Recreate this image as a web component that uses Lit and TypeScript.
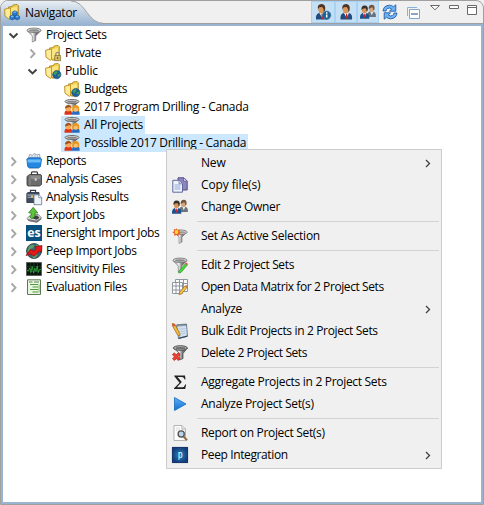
import { LitElement, html, css, svg, nothing, TemplateResult, SVGTemplateResult } from "lit";
import { customElement, property } from "lit/decorators.js";
import { classMap } from "lit/directives/class-map.js";
import { styleMap } from "lit/directives/style-map.js";

const FONT = '"Open Sans", "Noto Sans", sans-serif';

const folder = svg`
  <path d="M4.500 3 8.500 2.500 9 1l4-.6 1.300 1.300V12l-6 3-4-1z" fill="#f3d04e" stroke="#a57c14" stroke-width=".8"/>
  <path d="M6 4.500 13 2.800v8.500L7 13.500z" fill="#fbe682"/>
  <path d="M.6 5.200 3.200 4.600 6.500 3.800v10.700l-1.200.9L1 12.200z" fill="#fdeb98" stroke="#b88718" stroke-width=".9"/>
  <path d="M6.500 5v9.500l2 .7 4-1.700" fill="none" stroke="#cb9c1e" stroke-width=".9"/>`;

const funnelBody = svg`
  <path d="M1.300 3.800 6.300 9v6l3.400-1.500V9l5-5.200z" fill="url(#metal)" stroke="#666" stroke-width=".6"/>
  <ellipse cx="8" cy="3.300" rx="7" ry="2.200" fill="#ddd" stroke="#777" stroke-width=".9"/>
  <ellipse cx="8" cy="3.500" rx="5" ry="1.200" fill="#8b8b8b"/>`;

const metal = svg`<defs><linearGradient id="metal"><stop offset="0" stop-color="#888"/><stop offset=".4" stop-color="#f2f2f2"/><stop offset=".65" stop-color="#777"/><stop offset="1" stop-color="#505050"/></linearGradient></defs>`;

const globe = svg`
  <circle cx="11.800" cy="11.600" r="4.200" fill="#1d609f" stroke="#123f6c" stroke-width=".5"/>
  <path d="M8.500 10.500q1-2.600 3.300-2.600l.8 1.600-1.500 1.500-.4 1.500zM12.500 12l2.500-1.500.7.5-1.500 2.800-1.700-1z" fill="#3fa34a"/>`;

const pencil = svg`
  <path d="m7.500 13.500 5.500-6.500 2 1.600-5.500 6.300-2.500.8z" fill="#f6c544" stroke="#9a6a12" stroke-width=".7"/>
  <path d="m13 7 1-1 1.900 1.600-.9 1z" fill="#d8604c"/>`;

const man = svg`
  <path d="M2.500 15.500q-.6-5 2.500-6.200L8 8l3.500 1.300q3.300 1.200 2.500 6.200z" fill="#214d7e"/>
  <path d="M5.800 8.800 8 8.500l2.800.3L9 14.500z" fill="#fff"/>
  <path d="M7.900 9.800h1.200l1 4-1 1.700-1.100-1.700z" fill="#c3222d"/>
  <ellipse cx="7.800" cy="5.300" rx="3" ry="4.200" fill="#d89659"/>
  <path d="M4.500 6Q3.300.2 8 .1q4.800.1 3.500 6.400l-1.200 1.500Q10.600 4.500 8.700 3L6 3.300Q4.800 4 4.500 6z" fill="#4d3426"/>`;

const pair = svg`
  <path d="M7 13q0-5 2.500-5.300h3.500q3.300.5 2.900 5.300z" fill="#68737c"/>
  <path d="m10.300 7.800 1.500 3.500 1.600-3.500z" fill="#eee"/>
  <ellipse cx="11.500" cy="4.700" rx="2.500" ry="3.400" fill="#d5a47b"/>
  <path d="M8.700 5Q8.500.8 11.800.8q3.400.1 2.700 4.700l-1.200 1q0-2.500-1-3.200z" fill="#75553e"/>
  <path d="M0 14.800Q-.3 10 2.300 9.200L4.500 8l2.400 1.200Q9.600 10 9.300 14.800z" fill="#1b518d"/>
  <path d="m3 8.800 1.700 5L6.500 8.800z" fill="#fff"/><path d="M4.300 9.500h1l.5 3-.9 1.200-1-1.200z" fill="#c3222d"/>
  <ellipse cx="4.500" cy="5.800" rx="2.600" ry="3.500" fill="#d89659"/>
  <path d="M1.600 6.300Q.8 1.500 4.600 1.500q4 .1 3.100 5L6.500 7.500q.2-2.500-1-3.300-3-.3-3.900 2.100z" fill="#38302a"/>`;

const groupFilter = svg`${metal}
  <path d="M1.500 3 6 7.800h4L14.500 3z" fill="url(#metal)"/>
  <ellipse cx="8" cy="2.500" rx="7" ry="2" fill="#d6d6d6" stroke="#606060" stroke-width=".9"/>
  <ellipse cx="8" cy="2.800" rx="4.800" ry="1" fill="#858585"/>
  <path d="M.5 15.800q-.3-4 2.200-4.500h3.300q2.500.5 2 4.500z" fill="#dc341b"/>
  <path d="M8 15.800q-.2-4 2.200-4.500h3.400q2.400.5 2 4.500z" fill="#276bc1"/>
  <circle cx="4.300" cy="9.500" r="3" fill="#f5a95a"/><path d="M1 9.500q0-3.600 3.300-3.600t3.200 3.400L5.800 8z" fill="#a0521a"/>
  <circle cx="11.600" cy="9.700" r="3" fill="#f7c078"/><path d="M8.200 13V9q.3-3.100 3.400-3.100T15.200 9v4l-1.300-1.500-.6-2.700-3 .2-.7 2.500z" fill="#e9971b"/>`;

const icons: Record<string, SVGTemplateResult> = {
  navigator: svg`${folder}
    <path d="M5.800 12.300 8.200 11l2.500 1.300v2.500l-2.500 1.200-2.400-1.200zM10.700 12.300l2.400-1.300 2.500 1.300v2.500L13.100 16l-2.400-1.200zM8.300 8l2.500-1.300L13.300 8v2.700L10.800 12l-2.500-1.300z" fill="#2779cf" stroke="#124f99" stroke-width=".6"/>
    <path d="m9 8.200 1.800-.9 1.800.9-1.800.9zM6.500 12.600l1.800-1 1.700 1-1.700.8zM11.300 12.600l1.800-1 1.700 1-1.700.8z" fill="#75b8f2"/>`,
  filter: svg`${metal}${funnelBody}`,
  locked: svg`${folder}<path d="M10.800 11V9.300q0-2 1.800-2t1.800 2V11" fill="none" stroke="#8e8e8e" stroke-width="1.200"/><path d="M9.700 10.500h5.900v5.200H9.700z" fill="#d3bb69" stroke="#7e6a2c" stroke-width=".7"/><path d="M12.200 12h.9v2h-.9z" fill="#604e18"/>`,
  public: svg`${folder}${globe}`,
  group: groupFilter,
  reports: svg`
    <path d="m2.500 5.500 1-4 3 .7L8.500.5 11 2l2.500-.8.7 4.300z" fill="#e7edf3" stroke="#7b8b9a" stroke-width=".7"/>
    <path d="M6 2.500v3M9 1.500v4M11.500 2.500v3" stroke="#93a4b3" stroke-width=".7"/>
    <path d="M.8 6 3 4.800h11.200L15.500 6l-1 7.500L12.500 15H3.300l-1.600-1.500z" fill="#2288e2" stroke="#125da8" stroke-width=".8"/>
    <path d="M1.300 6.500h13.600l-.4 3H1.700z" fill="#6bbcf8"/>`,
  briefcase: svg`
    <path d="M5.500 4V2q0-1.200 1-1.200h4q1 0 1 1.200v2" fill="none" stroke="#3d3d3d" stroke-width="1.300"/>
    <path d="M1 5.500 3.500 3.500H14q1.500 0 1.500 1.500v8.500L13.500 15h-11Q1 15 1 13.500z" fill="#6c6c6c" stroke="#343434" stroke-width=".8"/>
    <path d="M4 4v10.500" stroke="#9d9d9d" stroke-width=".8"/><path d="M5 4.500h9.500v3.300L10 9 5 8z" fill="#8d8d8d"/><path d="M8.700 7.200h2v2.500h-2z" fill="#ccc"/>`,
  results: svg`
    <path d="M4.500 3.500V1.300h5v2.200" fill="none" stroke="#323d4c" stroke-width="1.300"/>
    <path d="M.8 4.500 2 3.500h11v9l-1 1H.8z" fill="#3f4c5d" stroke="#252f3c" stroke-width=".8"/>
    <path d="M1.300 5h11v2.500h-11z" fill="#7a899b"/><path d="M1.500 8.500H9" stroke="#b8c4d0" stroke-width=".7"/><path d="M5 6.500h2v2H5z" fill="#e5c25a"/>
    <path d="M8 5.800h5l2.700 2.700v7.200H8z" fill="#eef3fa" stroke="#65748a" stroke-width=".8"/><path d="M12.800 6v2.700h2.700" fill="#fff" stroke="#65748a" stroke-width=".7"/>`,
  export: svg`
    <path d="M1 11.500 5 7.500h7.500L15.500 11l-4.500 4-8.500-1.500z" fill="#dadada" stroke="#767676" stroke-width=".8"/>
    <path d="m1.500 12 8.800 1.500 5-2.500v1.500l-4.500 3.200L2.500 14z" fill="#777"/><path d="m4 10.500 3-2h4.500l2 2.500-3 1.800z" fill="#404040"/>
    <path d="M5.500 11.500Q9.500 10.500 9 6h2.800L7.200.3 2.700 5.800l2.600.2q.7 2.200-1.600 3.900z" fill="#5fc43b" stroke="#26811c" stroke-width=".8"/>`,
  es: svg`<path d="M0 0h16v16H0z" fill="#07507f"/><text x="8" y="12" font-family="Open Sans, sans-serif" font-weight="bold" font-size="12" text-anchor="middle" textLength="13.500" lengthAdjust="spacingAndGlyphs" fill="#fff">es</text>`,
  peep: svg`
    <circle cx="8" cy="8" r="7.500" fill="#45606d" stroke="#273f48" stroke-width=".8"/>
    <path d="m3 3.500 3-2 2.500 1L7 5 4.500 6 3 9H1.200zM10 1.500l3.500 1.500L15 7l-4-1-1.500-2zM7 9l3.500 1 1 2.500L9 15H7L6 11.500z" fill="#58a06a"/>
    <path d="M0 12.500 4.500 6.500l3 1.800 3-3-1.500-1.500L16 2.500l-.5 6.800-2-1.500-5.300 5.400-3.500-2.200z" fill="#e61818" stroke="#8b0808" stroke-width=".7"/>`,
  sensitivity: svg`
    <path d="M.5 1.500h15v13H.5z" fill="#0a160d" stroke="#5c5c5c"/>
    <path d="M1 5.500h14M1 10.500h14M4.500 2v12M8 2v12M11.500 2v12" stroke="#254b2b" stroke-width=".5"/>
    <path d="M1 9.500h1.500L3.700 7l1.200 4.500L6.200 5.500l1.400 6.500 1.200-5 1.200 3.500L11.200 5l1.200 6.500 1-3H15" fill="none" stroke="#2fae40" stroke-width=".8"/>`,
  evaluation: svg`
    <path d="M1.500 .8h13v14.700h-13z" fill="#e8f5df" stroke="#5c7a50"/>
    <path d="M3 3h3.500M8 3h5" stroke="#64805a"/><path d="M4 5.500h8M6.500 8H12M4 10.500h8M6.500 13H12" stroke="#4f9b3e" stroke-width="1.200"/><path d="M13 5.500v8" stroke="#84aa78"/>`,
  copy: svg`
    <path d="M6 .8h6L15.200 4v9H6z" fill="#8f86bb" stroke="#584d8c" stroke-width="1"/><path d="M11.500 1v3.200h3.500" fill="#d8d4ee" stroke="#584d8c" stroke-width=".7"/>
    <path d="M.8 3.300h6.400l3.300 3.300v8.600H.8z" fill="#eef2fc" stroke="#5e689f" stroke-width="1"/><path d="M7 3.500v3.300h3.300" fill="#cfd6ee" stroke="#5e689f" stroke-width=".7"/>
    <path d="M2.500 8h6M2.500 10h6M2.500 12h6" stroke="#95a8d5" stroke-width="1"/>`,
  owners: pair,
  person: man,
  personInfo: svg`<g transform="translate(-1.500)">${man}</g><circle cx="11.700" cy="11.200" r="4.200" fill="#1d6295" stroke="#4f86ac" stroke-width=".6"/><path d="M11.700 8.300v1.400M11.700 10.400v3.200" stroke="#fff" stroke-width="1.500"/>`,
  active: svg`${metal}<path d="M2.500 4.500 7 9v6.500l3-1.500V9l4.500-4.500z" fill="url(#metal)" stroke="#777" stroke-width=".6"/><ellipse cx="8.800" cy="4.200" rx="6.400" ry="2.200" fill="#e2e2e2" stroke="#777" stroke-width=".9"/><ellipse cx="9.500" cy="4.300" rx="4.300" ry="1.100" fill="#999"/>
    <path d="m4.500.2 1.200 1.700 2.100-.2-.3 2 1.400 1.600-2.200.6-.4 2.400-1.800-1.300-2.400.8.2-2.400L.3 4.200l1.800-1L1.800 1l2.100.6z" fill="#ee5a20"/><circle cx="4.500" cy="4" r="1.900" fill="#ffd938"/>`,
  edit: svg`${metal}${funnelBody}<path d="m7 14 6.500-7.500 1.900 1.500-6.300 7.400-2.500.6z" fill="#48d83b" stroke="#278a22" stroke-width=".6"/><path d="m13.200 6.700 1-1.300 1.800 1.500-.9 1.200z" fill="#e24d35"/>`,
  matrix: svg`
    <path d="M3.500.5h12v12h-12zM3.500 4.500h12M3.500 8.500h12M7.500.5v12M11.500.5v12" fill="#fbfbfb" stroke="#858d98" stroke-width=".9"/>
    <path d="M.5 3.500h10v11H.5zM.5 7h10M.5 11h10M4 3.500v11M7.500 3.500v11" fill="#fff" stroke="#858d98" stroke-width=".9"/>${pencil}`,
  bulk: svg`
    <path d="m4.500 2 10-.5 1 11.500-9 2.500z" fill="#d3e1ef" stroke="#66788c" stroke-width=".9"/><path d="m6.500 15.400 9-2.200" stroke="#34495e" stroke-width="1.300"/>
    <path d="m6 1v2.500M8 1v2.500M10 .8v2.500M12 .6v2.500M14 .5v2.500" stroke="#526171" stroke-width=".9"/><path d="m7 6 6.500-.4M7.500 8.500l6-.5M8 11l5.500-.8" stroke="#a8bfd4" stroke-width=".7"/>
    <path d="m.3.6 2.400.5 5 9.200.2 3-2.500-1.600L.6 3z" fill="#f6bd38" stroke="#94601a" stroke-width=".7"/><path d="m.3.6 2.400.5.8 1.500-2.100 1.200-.8-1z" fill="#df5742"/>`,
  remove: svg`${metal}<path d="M1.500 3 7.700 8.500v6.500l3.300-1.500V8.500L15.300 3z" fill="url(#metal)" stroke="#444" stroke-width=".7"/><ellipse cx="8.400" cy="3" rx="7" ry="2.300" fill="#b0b0b0" stroke="#484848" stroke-width=".9"/><ellipse cx="8.600" cy="3.200" rx="5" ry="1.200" fill="#707070"/>
    <path d="m.4 9.600 1.900-1.800 1.900 1.900 2-1.900L8 9.600 6.100 11.600l1.900 2.200-1.700 1.800-2-1.900-1.900 1.900-1.900-1.800 1.900-2.100z" fill="#ee3f31" stroke="#9c150f" stroke-width=".6"/>`,
  sigma: svg`<path d="M2.300 1.500H13l.5 4h-.9Q12.200 3 10 3H5.500l4.300 5-4.900 5.300h5.300q2.200 0 3-2.800h.9L13.200 15H2v-.8L7.500 8.700 2.300 2.300z" fill="#222"/>`,
  play: svg`<defs><linearGradient id="play" x2="0" y2="1"><stop stop-color="#5db1f5"/><stop offset="1" stop-color="#126fd2"/></linearGradient></defs><path d="M2.500 1.500 14 8 2.500 14.500z" fill="url(#play)" stroke="#1469bd" stroke-width=".8" stroke-linejoin="round"/>`,
  report: svg`
    <path d="M2 .5h8l3.500 3.500v11.500H2z" fill="#fff" stroke="#a2a2a2" stroke-width=".8"/><path d="M9.800.8V4.200h3.500" fill="#e5e5e5" stroke="#a2a2a2" stroke-width=".7"/>
    <path d="M4 3h4M4 5h4" stroke="#ccc" stroke-width=".7"/><circle cx="9.200" cy="9" r="3.100" fill="#b9d4e8" stroke="#4f4f4f" stroke-width="1.300"/><path d="m11.500 11.500 3.500 3.700" stroke="#8f6e45" stroke-width="2"/>`,
  peepLogo: svg`<defs><radialGradient id="pl"><stop stop-color="#2685bd"/><stop offset="1" stop-color="#153c7b"/></radialGradient></defs><path d="M0 0h16v16H0z" fill="url(#pl)"/><path d="M.4.4h15.200v15.200H.4z" fill="none" stroke="#173464" stroke-width=".8"/><text x="8.200" y="10.800" font-family="Liberation Sans, sans-serif" font-size="10" text-anchor="middle" textLength="4.500" lengthAdjust="spacingAndGlyphs" fill="#fff">p</text>`,
  refresh: svg`
    <path d="M1 7Q1.500 1.500 7.500 1.200q2.300 0 4 1.500L13.800.8v6.400H7.500l2.200-2.200Q7.500 3.300 5.500 4.500 4.300 5.300 4 7z" fill="#6fb2f2" stroke="#1f5ea9" stroke-width=".9"/>
    <path d="M15 9q-.5 5.500-6.500 5.800-2.300 0-4-1.500L2.200 15.200V8.800h6.300l-2.200 2.200q2.200 1.700 4.200.5 1.200-.8 1.500-2.500z" fill="#6fb2f2" stroke="#1f5ea9" stroke-width=".9"/>`,
  collapse: svg`<path d="M2.500 12V3.500H12" fill="none" stroke="#8bb2d6"/><path d="M4.500 5.500h10v9h-10z" fill="#fff" stroke="#7fa8cf"/><path d="M6 10h7" stroke="#1a4f8c" stroke-width="1.200"/>`,
};

@customElement("ui-icon")
class UiIcon extends LitElement {
  static styles = css`
    :host { display: block; width: 16px; height: 16px; flex: none; }
    svg { display: block; width: 16px; height: 16px; overflow: visible; }
  `;
  @property() name = "";
  render() {
    return html`<svg viewBox="0 0 16 16" aria-hidden="true">${icons[this.name] ?? nothing}</svg>`;
  }
}

const pen = document.createElement("canvas").getContext("2d")!;

/** Text spread over a fixed advance width. */
@customElement("ui-label")
class UiLabel extends LitElement {
  static styles = css`
    :host { display: block; flex: none; white-space: pre; }
  `;
  @property() text = "";
  @property({ type: Number }) width = 0;
  @property({ type: Number }) size = 12;
  render() {
    pen.font = `${this.size}px ${FONT}`;
    const gap = (this.width - pen.measureText(this.text).width) / this.text.length;
    return html`<span style=${styleMap({ letterSpacing: `${gap.toFixed(3)}px`, fontSize: `${this.size}px` })}>${this.text}</span>`;
  }
}

interface Node { level: number; icon: string; text: string; width: number; open?: boolean; leaf?: boolean; selected?: boolean; }

const nodes: Node[] = [
  { level: 0, icon: "filter", text: "Project Sets", width: 60.500, open: true },
  { level: 1, icon: "locked", text: "Private", width: 36 },
  { level: 1, icon: "public", text: "Public", width: 33, open: true },
  { level: 2, icon: "public", text: "Budgets", width: 43, leaf: true },
  { level: 2, icon: "group", text: "2017 Program Drilling - Canada", width: 164.500, leaf: true },
  { level: 2, icon: "group", text: "All Projects", width: 59, leaf: true, selected: true },
  { level: 2, icon: "group", text: "Possible 2017 Drilling - Canada", width: 162, leaf: true, selected: true },
  { level: 0, icon: "reports", text: "Reports", width: 40 },
  { level: 0, icon: "briefcase", text: "Analysis Cases", width: 75.500 },
  { level: 0, icon: "results", text: "Analysis Results", width: 82.500 },
  { level: 0, icon: "export", text: "Export Jobs", width: 58.500 },
  { level: 0, icon: "es", text: "Enersight Import Jobs", width: 113.500 },
  { level: 0, icon: "peep", text: "Peep Import Jobs", width: 90.500 },
  { level: 0, icon: "sensitivity", text: "Sensitivity Files", width: 79 },
  { level: 0, icon: "evaluation", text: "Evaluation Files", width: 80.800 },
];

interface Item { icon?: string; text: string; width: number; more?: boolean; }

const menu: Item[][] = [
  [
    { text: "New", width: 24.500, more: true },
    { icon: "copy", text: "Copy file(s)", width: 59.500 },
    { icon: "owners", text: "Change Owner", width: 79 },
  ],
  [{ icon: "active", text: "Set As Active Selection", width: 119 }],
  [
    { icon: "edit", text: "Edit 2 Project Sets", width: 93 },
    { icon: "matrix", text: "Open Data Matrix for 2 Project Sets", width: 182.700 },
    { text: "Analyze", width: 41, more: true },
    { icon: "bulk", text: "Bulk Edit Projects in 2 Project Sets", width: 176.700 },
    { icon: "remove", text: "Delete 2 Project Sets", width: 106 },
  ],
  [
    { icon: "sigma", text: "Aggregate Projects in 2 Project Sets", width: 185.700 },
    { icon: "play", text: "Analyze Project Set(s)", width: 112.700 },
  ],
  [
    { icon: "report", text: "Report on Project Set(s)", width: 123.700 },
    { icon: "peepLogo", text: "Peep Integration", width: 86.700, more: true },
  ],
];

@customElement("app-root")
class AppRoot extends LitElement {
  static styles = css`
    :host {
      display: block; position: relative; width: 484px; height: 505px; overflow: hidden;
      background: #f0f0f0; color: #000;
      font: 12px/18px "Open Sans", "Noto Sans", sans-serif;
    }
    .view {
      box-sizing: border-box; height: 505px; display: flex; flex-direction: column;
      border: 1px solid #a0a0a0; border-radius: 8px 8px 0 0; overflow: hidden;
    }
    .bar { flex: none; height: 23px; display: flex; justify-content: space-between; align-items: flex-start; box-shadow: inset 0 -1px #a0a0a0; }
    .tab { display: grid; height: 23px; width: 106px; }
    .shape { grid-area: 1 / 1; display: block; width: 106px; height: 23px; }
    .title { grid-area: 1 / 1; display: flex; gap: 5px; padding: 3px 0 0 3px; }
    .tools { display: flex; align-items: flex-start; }
    .tool { box-sizing: border-box; width: 22px; height: 22px; padding: 3px 2px; }
    .on { border: 1px solid #a6d2f5; background: #c5e0f5; padding: 2px; }
    .first { width: 24px; padding-left: 3px; }
    .flat { padding-left: 3px; }
    .collapse { margin-left: 2px; }
    .window { display: block; width: 58px; height: 22px; margin: 0 1px 0 -1px; }
    .body { flex: 1; min-height: 0; background: #fff; border: 2px solid #99b4d1; }
    .row { display: flex; height: 18px; align-items: center; }
    .l0 { padding-left: 5px; } .l1 { padding-left: 24px; } .l2 { padding-left: 43px; }
    .twist { width: 11px; height: 12px; flex: none; padding-top: 2px; }
    .cell { display: flex; align-items: center; gap: 4px; height: 18px; margin-left: 4px; padding: 0 2px 0 3px; }
    .selected { background: #cce8ff; }
    .menu {
      position: absolute; left: 166px; top: 149px; box-sizing: border-box; width: 276px;
      padding: 2px; border: 1px solid #ccc; background: #f0f0f0;
    }
    .group + .group::before { content: ""; display: block; height: 1px; margin: 3px 0 3px 28px; background: #d2d2d2; }
    .item { display: flex; align-items: center; height: 22px; padding: 0 8px 0 3px; }
    .slot { width: 29px; flex: none; }
    .more { margin-left: auto; display: block; }
  `;

  private row(n: Node): TemplateResult {
    const arrow = n.leaf ? nothing : n.open
      ? svg`<path d="m1.500 3.500 4 4 4-4" fill="none" stroke="#404040" stroke-width="1.900"/>`
      : svg`<path d="m3.500 1.500 4 4.200-4 4.200" fill="none" stroke="#a6a6a6" stroke-width="1.900"/>`;
    return html`<div class="row l${n.level}">
      <svg class="twist" viewBox="0 0 11 12">${arrow}</svg>
      <div class=${classMap({ cell: true, selected: !!n.selected })}>
        <ui-icon name=${n.icon}></ui-icon><ui-label .text=${n.text} .width=${n.width}></ui-label>
      </div>
    </div>`;
  }

  private item(i: Item): TemplateResult {
    return html`<div class="item">
      <div class="slot">${i.icon ? html`<ui-icon name=${i.icon}></ui-icon>` : nothing}</div>
      <ui-label .text=${i.text} .width=${i.width}></ui-label>
      ${i.more ? html`<svg class="more" width="6" height="9" viewBox="0 0 6 9"><path d="m1 1 3.500 3.500L1 8" fill="none" stroke="#404040" stroke-width="1.300"/></svg>` : nothing}
    </div>`;
  }

  render() {
    return html`
      <div class="view">
        <div class="bar">
          <div class="tab">
            <svg class="shape" viewBox="0 0 106 23">
              <defs><linearGradient id="t" x2="0" y2="1"><stop stop-color="#e9eff5"/><stop offset="1" stop-color="#99b4d1"/></linearGradient></defs>
              <path d="M0 23V0H70C85 0 86 22.500 103 22.500V23z" fill="url(#t)"/>
              <path d="M70 0C85 0 86 22.500 103 22.500" fill="none" stroke="#a0a0a0"/>
            </svg>
            <div class="title"><ui-icon name="navigator"></ui-icon><ui-label text="Navigator" .width=${52}></ui-label></div>
          </div>
          <div class="tools">
            <div class="tool on first"><ui-icon name="personInfo"></ui-icon></div>
            <div class="tool on"><ui-icon name="person"></ui-icon></div>
            <div class="tool on"><ui-icon name="owners"></ui-icon></div>
            <div class="tool flat"><ui-icon name="refresh"></ui-icon></div>
            <div class="tool collapse"><ui-icon name="collapse"></ui-icon></div>
            <svg class="window" viewBox="0 0 58 22" fill="#fff" stroke="#696969">
              <path d="M6.500 4.500h9L11 8.800z"/><path d="M25.500 4.500h9v3h-9z"/><path d="M43.500 4.500h9v9h-9zM43.500 6.500h9"/>
            </svg>
          </div>
        </div>
        <div class="body">${nodes.map((n) => this.row(n))}</div>
      </div>
      <div class="menu">${menu.map((g) => html`<div class="group">${g.map((i) => this.item(i))}</div>`)}</div>
    `;
  }
}
